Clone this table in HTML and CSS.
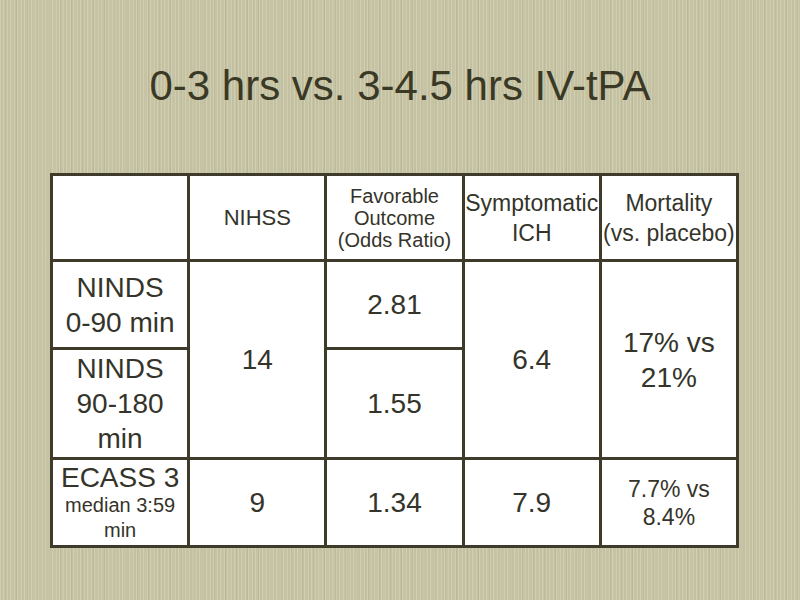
FILE: index.html
```html
<!DOCTYPE html>
<html>
<head>
<meta charset="utf-8">
<link rel="stylesheet" href="styles.css">
</head>
<body>
<div class="slide">
  <h1 class="title">0-3 hrs vs. 3-4.5 hrs IV-tPA</h1>
  <div class="grid">
    <div class="cell"></div>
    <div class="cell head-md">NIHSS</div>
    <div class="cell head-sm">Favorable<br>Outcome<br>(Odds Ratio)</div>
    <div class="cell head-lg">Symptomatic<br>ICH</div>
    <div class="cell head-lg">Mortality<br>(vs. placebo)</div>

    <div class="cell big">NINDS<br>0-90 min</div>
    <div class="cell big span2">14</div>
    <div class="cell big">2.81</div>
    <div class="cell big span2">6.4</div>
    <div class="cell big span2">17% vs<br>21%</div>

    <div class="cell big">NINDS<br>90-180<br>min</div>
    <div class="cell big">1.55</div>

    <div class="cell ecass"><span class="big-line">ECASS 3</span><span class="small-line">median 3:59<br>min</span></div>
    <div class="cell big">9</div>
    <div class="cell big">1.34</div>
    <div class="cell big">7.9</div>
    <div class="cell med">7.7% vs<br>8.4%</div>
  </div>
</div>
</body>
</html>
```

FILE: styles.css
```css
html, body {
  margin: 0;
  padding: 0;
}
body {
  width: 800px;
  height: 600px;
  overflow: hidden;
  background-color: #cac7a8;
  background-image:
    repeating-linear-gradient(90deg,
      rgba(255,255,240,0.10) 0px, rgba(255,255,240,0.10) 1px,
      rgba(90,85,50,0.06) 1px, rgba(90,85,50,0.06) 3px,
      rgba(255,255,240,0.14) 3px, rgba(255,255,240,0.14) 4px,
      rgba(90,85,50,0.03) 4px, rgba(90,85,50,0.03) 7px),
    repeating-linear-gradient(90deg,
      rgba(255,255,240,0.0) 0px, rgba(255,255,240,0.0) 5px,
      rgba(70,65,40,0.07) 5px, rgba(70,65,40,0.07) 6px,
      rgba(255,255,240,0.0) 6px, rgba(255,255,240,0.0) 11px);
  font-family: "Liberation Sans", Arial, sans-serif;
}
.slide {
  padding-top: 62px;
}
.title {
  margin: 0;
  font-weight: normal;
  font-size: 42px;
  line-height: 47px;
  text-align: center;
  color: #3a3925;
}
.grid {
  margin: 64px 0 0 50px;
  width: 689px;
  height: 375px;
  box-sizing: border-box;
  padding: 3px;
  background: #3e3b2b;
  display: grid;
  grid-template-columns: repeat(5, 1fr);
  grid-template-rows: 83px 85px 107px 85px;
  gap: 3px;
}
.cell {
  background: #ffffff;
  color: #35342a;
  display: flex;
  flex-direction: column;
  align-items: center;
  justify-content: center;
  text-align: center;
  white-space: nowrap;
}
.span2 {
  grid-row: span 2;
}
.head-md {
  font-size: 22px;
}
.head-sm {
  font-size: 20px;
  line-height: 22px;
}
.head-lg {
  font-size: 23px;
  line-height: 30px;
}
.big {
  font-size: 28px;
  line-height: 35px;
}
.med {
  font-size: 23px;
  line-height: 28px;
}
.ecass .big-line {
  font-size: 28px;
  line-height: 30px;
}
.ecass .small-line {
  font-size: 20px;
  line-height: 25px;
}
```
